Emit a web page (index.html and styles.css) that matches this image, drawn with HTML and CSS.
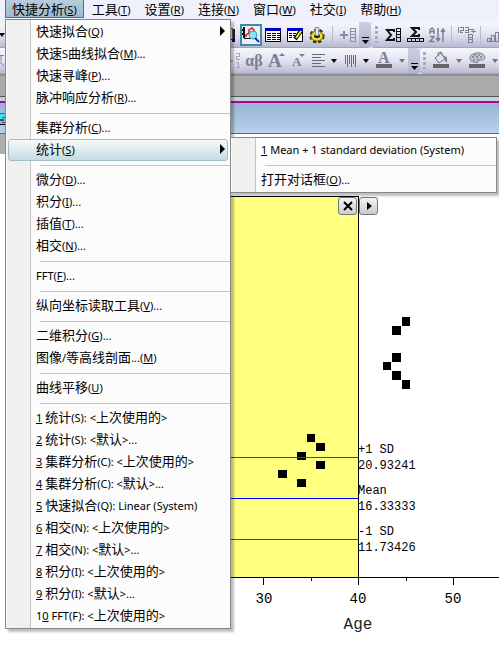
FILE: index.html
```html
<!DOCTYPE html>
<html lang="zh-CN">
<head>
<meta charset="utf-8">
<title>快捷分析</title>
<link rel="stylesheet" href="styles.css">
</head>
<body>
<nav class="menubar">
  <button class="top open">快捷分析<span class="k">(<u>S</u>)</span></button>
  <button class="top">工具<span class="k">(<u>T</u>)</span></button>
  <button class="top">设置<span class="k">(<u>R</u>)</span></button>
  <button class="top">连接<span class="k">(<u>N</u>)</span></button>
  <button class="top">窗口<span class="k">(<u>W</u>)</span></button>
  <button class="top">社交<span class="k">(<u>I</u>)</span></button>
  <button class="top">帮助<span class="k">(<u>H</u>)</span></button>
</nav>

<div class="toolrow">
  <div class="toolbar">
    <button class="arrow edge" aria-label="更多"><svg width="6" height="4"><path d="M0 0h6L3 4z"/></svg></button>
    <span class="covered-one"></span>
    <button class="tool" aria-label="列"><svg width="16" height="18"><path fill="#ffee20" stroke="#555" d="M3.500 2.500h8v11h-8z"/><path stroke="#222" stroke-width="2" d="M13 3v12"/><path fill="#0000a0" d="M8 13h6v3h-3v-2H8z"/></svg></button>
    <button class="tool active" aria-label="缩放"><svg width="18" height="18" fill="none"><path stroke="#111" stroke-width="2" d="M2 1v11M0 4h2M0 8h2"/><path stroke="#111" d="M2 12.500h7"/><path stroke="#e01010" stroke-width="1.500" d="M4 11V9l3-2V4l3-2 2 2v2"/><circle cx="11" cy="9" r="4" fill="#7ee8f4" stroke="#4798b0"/><path stroke="#1828b0" stroke-width="2" d="M13 12l4 4"/></svg></button>
    <button class="tool" aria-label="工作表"><svg width="16" height="16" shape-rendering="crispEdges"><path fill="#fff" stroke="#000" d="M.5 1.500h15v13H.5z"/><path fill="#0000c8" d="M0 1h16v3H0z"/><path stroke="#000" stroke-dasharray="4 1" d="M2 6.500h13M2 8.500h13M2 10.500h13M2 12.500h13"/></svg></button>
    <button class="tool" aria-label="编辑"><svg width="16" height="16"><path fill="#fff" stroke="#000" d="M.5 1.500h15v13H.5z"/><path fill="#0000c8" d="M0 1h16v3H0z"/><path stroke="#000" stroke-dasharray="3 1" d="M2 6.500h8M2 8.500h6M2 10.500h4"/><path stroke="#000" stroke-width="4" d="M14 4l-6 8"/><path stroke="#ffe820" stroke-width="2" d="M14 4l-5 7"/></svg></button>
    <button class="tool" aria-label="设置"><svg width="18" height="16"><circle cx="9" cy="9" r="6" fill="#d8c018" stroke="#373000" stroke-width="3" stroke-dasharray="3 2"/><ellipse cx="9" cy="9" rx="6" ry="5" fill="#f0dc38" stroke="#807000"/><ellipse cx="9" cy="9" rx="3" ry="2" fill="#222"/><path fill="#eee" stroke="#888" d="M7.500.5h3v8h-3z"/></svg></button>
    <span class="sep"></span>
    <button class="tool" aria-label="添加列"><svg width="18" height="16" fill="none" stroke="#8b8fa3" shape-rendering="crispEdges"><path stroke-width="2" d="M1 8h8M5 4v8"/><path d="M11.500 1.500h5v13h-5zM11 4.500h6M11 7.500h6M11 10.500h6"/></svg></button>
    <button class="more" aria-label="工具栏选项"><svg width="7" height="7"><path d="M0 0h7v1H0zM0 3h7L3.500 7z"/></svg></button>
  </div>
  <div class="toolbar rest">
    <span class="grip"></span>
    <button class="tool" aria-label="列统计"><svg width="17" height="16" fill="none" stroke="#111"><path stroke-width="2" d="M9 5V3H2l4 5-4 5h7v-2"/><path shape-rendering="crispEdges" d="M11.500 1.500h4v13h-4zM11 4.500h5M11 7.500h5M11 10.500h5"/></svg></button>
    <button class="tool" aria-label="行统计"><svg width="17" height="16" fill="none" stroke="#111"><path stroke-width="2" d="M12 3V1H5l4 4-4 4h7V7"/><path shape-rendering="crispEdges" d="M.5 11.500h16v3H.5zM4.500 11v4M8.500 11v4M12.500 11v4"/></svg></button>
    <button class="tool" aria-label="排序"><svg width="17" height="16" fill="none" stroke="#7d8196" stroke-width="1.500"><path d="M1 7V3l2-2 2 2v4M1 4.500h4M1 9.500h4l-4 5h4.500M9 1v13M7 11l2 3 2-3M14 15V2M12 5l2-3 2 3"/></svg></button>
    <span class="sep"></span>
    <button class="tool" aria-label="设置列值"><svg width="19" height="18" fill="none" stroke="#7d8196" shape-rendering="crispEdges"><path d="M1.500 1v6M3 1.500h3v3H3.500V6.500H6M8 1.500h3v5H8M8 4.500h3M12 3.500h4.500v3M14 5.500h5"/><path d="M11.500 8.500h4v8h-4zM11 11.500h5M11 13.500h5"/></svg></button>
    <span class="sep"></span>
    <button class="tool" aria-label="柱状图"><svg width="16" height="16" fill="none" stroke="#7d8196" shape-rendering="crispEdges"><path d="M.5 14.500v-3h3v3zM4.500 14.500v-6h3v6zM8.500 14.500v-9h3v9zM12.500 14.500v-12h3v12z"/></svg></button>
  </div>
</div>

<div class="toolrow format">
  <div class="toolbar">
    <button class="arrow edge" aria-label="字体"><svg width="6" height="12" fill="none" stroke="#7d8196"><path d="M0 .5h5M0 6l5 5M2 1v5"/></svg></button>
    <span class="covered-two"></span>
    <button class="tool" aria-label="上下标"><svg width="14" height="17" fill="none" stroke="#a3a6b4" shape-rendering="crispEdges"><path stroke-width="2" d="M0 9h6"/><path d="M9 1.500h3.500v3h-3v3H13M9 10.500h2v5M9 15.500h4"/></svg></button>
    <button class="tool" aria-label="希腊字母"><span class="greek">αβ</span></button>
    <button class="tool wide" aria-label="增大字体"><svg width="17" height="17" class="dim"><text x="0" y="15" class="glyph">A</text><path d="M11 4l3-3 3 3z"/></svg></button>
    <button class="tool" aria-label="减小字体"><svg width="14" height="17" class="dim"><text x="1" y="14" class="glyph-small">A</text><path d="M8 2h6l-3 3z"/></svg></button>
    <button class="tool" aria-label="对齐"><svg width="13" height="14" shape-rendering="crispEdges" stroke="#666a7c"><path d="M0 .5h13M0 3.500h9M0 6.500h13M0 9.500h9M0 12.500h13"/></svg></button>
    <button class="arrow" aria-label="对齐选项"><svg width="6" height="4"><path d="M0 0h6L3 4z"/></svg></button>
    <button class="tool" aria-label="分布"><svg width="13" height="14" shape-rendering="crispEdges" stroke="#666a7c"><path d="M1.500 1v9M3.500 1v12M5.500 1v9M7.500 1v12M9.500 1v9M11.500 1v12"/></svg></button>
    <button class="arrow" aria-label="分布选项"><svg width="6" height="4"><path d="M0 0h6L3 4z"/></svg></button>
    <button class="tool wide" aria-label="字体颜色"><svg width="17" height="17" class="dim"><text x="2" y="11" class="glyph-bold">A</text><path fill="#666" d="M0 12h16v4H0z"/></svg></button>
    <button class="arrow gray" aria-label="颜色选项"><svg width="6" height="4"><path d="M0 0h6L3 4z"/></svg></button>
    <button class="more" aria-label="工具栏选项"><svg width="7" height="7"><path d="M0 0h7v1H0zM0 3h7L3.500 7z"/></svg></button>
  </div>
  <div class="toolbar rest">
    <span class="grip"></span>
    <button class="tool wide" aria-label="填充颜色"><svg width="17" height="17"><path fill="#dfe2ea" stroke="#6f7385" d="M2 6l6-5 4 6-6 4z"/><path fill="none" stroke="#6f7385" d="M5 4V1l3-1 2 4"/><path fill="#7d8196" d="M11 4l3 1v6l-2-2z"/><path fill="#666" d="M0 12h16v4H0z"/></svg></button>
    <button class="arrow gray" aria-label="填充选项"><svg width="6" height="4"><path d="M0 0h6L3 4z"/></svg></button>
    <button class="tool wide" aria-label="调色板"><svg width="17" height="17"><path fill="#c3c6d0" stroke="#7d8196" d="M2 9Q-1 4 4 2q6-3 10 0 4 4 0 6h-4l-2 3z"/><path fill="none" stroke="#8a8ea0" stroke-width="2" stroke-dasharray="2 2" d="M3 5h11M5 3h7M4 8h6"/><path fill="#666" d="M0 12h16v4H0z"/></svg></button>
    <button class="arrow gray" aria-label="调色板选项"><svg width="6" height="4"><path d="M0 0h6L3 4z"/></svg></button>
  </div>
</div>

<div class="workspace"></div>
<div class="titlebar">
  <svg width="5" height="12" shape-rendering="crispEdges"><path fill="#40e0e8" d="M0 0h5v12H0z"/><path fill="#d03030" d="M0 0h5v1H0zM2 4h3v1H2z"/><path fill="#803070" d="M0 6h4v2H0zM2 9h3v1H2z"/><path d="M0 11h5v1H0z"/></svg>
</div>

<main class="graph">
  <svg class="plot" shape-rendering="crispEdges">
    <path fill="#aeaeae" d="M0 0h5v20H0z"/>
    <path fill="#ffff80" d="M200 62h158v381H200z"/>
    <g id="points">
      <path d="M307 300h8v8h-8zM316 309h9v8h-9zM297 318h9v8h-9zM316 327h9v8h-9zM278 336h9v8h-9zM297 345h9v8h-9z"/>
      <path d="M402 183h8v9h-8zM392 192h9v9h-9zM392 219h9v9h-9zM383 228h8v8h-8zM392 237h9v9h-9zM402 246h8v9h-8z"/>
    </g>
    <path stroke="#f00" d="M200 323.500h158M200 405.500h158"/>
    <path stroke="#00f" d="M200 364.500h158"/>
    <path stroke="#000" fill="none" d="M200 62.500h158.500v381M200 443.500h299M263.500 443v8M358.500 443v8M453.500 443v8M311.500 443v4M406.500 443v4"/>
    <g class="note">
      <text x="358" y="319">+1 SD</text><text x="358" y="335">20.93241</text>
      <text x="358" y="360">Mean</text><text x="358" y="376">16.33333</text>
      <text x="358" y="401">-1 SD</text><text x="358" y="417">11.73426</text>
    </g>
    <g class="scale">
      <text x="264" y="469">30</text><text x="358" y="469">40</text><text x="453" y="469">50</text>
    </g>
    <text class="axis" x="358" y="495">Age</text>
  </svg>
  <div class="handles">
    <button aria-label="关闭"><svg width="10" height="10"><path stroke="#000" stroke-width="2" d="M1 1l8 8M9 1L1 9"/></svg></button>
    <button aria-label="展开"><svg width="10" height="10"><path d="M3 1v8l5-4z"/></svg></button>
  </div>
</main>

<ul class="menu">
  <li class="sub">快速拟合<span class="k">(<u>Q</u>)</span></li>
  <li>快速<span class="k">S</span>曲线拟合<span class="k">(<u>M</u>)...</span></li>
  <li>快速寻峰<span class="k">(<u>P</u>)...</span></li>
  <li>脉冲响应分析<span class="k">(<u>R</u>)...</span></li>
  <li class="rule"></li>
  <li>集群分析<span class="k">(<u>C</u>)...</span></li>
  <li class="sub hot">统计<span class="k">(<u>S</u>)</span>
    <ul class="menu flyout">
      <li><span class="k"><u>1</u> Mean + 1 standard deviation (System)</span></li>
      <li class="rule"></li>
      <li>打开对话框<span class="k">(<u>O</u>)...</span></li>
    </ul>
  </li>
  <li class="rule"></li>
  <li>微分<span class="k">(<u>D</u>)...</span></li>
  <li>积分<span class="k">(<u>I</u>)...</span></li>
  <li>插值<span class="k">(<u>T</u>)...</span></li>
  <li>相交<span class="k">(<u>N</u>)...</span></li>
  <li class="rule"></li>
  <li><span class="k">FFT(<u>F</u>)...</span></li>
  <li class="rule"></li>
  <li>纵向坐标读取工具<span class="k">(<u>V</u>)...</span></li>
  <li class="rule"></li>
  <li>二维积分<span class="k">(<u>G</u>)...</span></li>
  <li>图像<span class="k">/</span>等高线剖面<span class="k">...(<u>M</u>)</span></li>
  <li class="rule"></li>
  <li>曲线平移<span class="k">(<u>U</u>)</span></li>
  <li class="rule"></li>
  <li><span class="k"><u>1</u> </span>统计<span class="k">(S): &lt;</span>上次使用的<span class="k">&gt;</span></li>
  <li><span class="k"><u>2</u> </span>统计<span class="k">(S): &lt;</span>默认<span class="k">&gt;...</span></li>
  <li><span class="k"><u>3</u> </span>集群分析<span class="k">(C): &lt;</span>上次使用的<span class="k">&gt;</span></li>
  <li><span class="k"><u>4</u> </span>集群分析<span class="k">(C): &lt;</span>默认<span class="k">&gt;...</span></li>
  <li><span class="k"><u>5</u> </span>快速拟合<span class="k">(Q): Linear (System)</span></li>
  <li><span class="k"><u>6</u> </span>相交<span class="k">(N): &lt;</span>上次使用的<span class="k">&gt;</span></li>
  <li><span class="k"><u>7</u> </span>相交<span class="k">(N): &lt;</span>默认<span class="k">&gt;...</span></li>
  <li><span class="k"><u>8</u> </span>积分<span class="k">(I): &lt;</span>上次使用的<span class="k">&gt;</span></li>
  <li><span class="k"><u>9</u> </span>积分<span class="k">(I): &lt;</span>默认<span class="k">&gt;...</span></li>
  <li><span class="k">1<u>0</u> FFT(F): &lt;</span>上次使用的<span class="k">&gt;</span></li>
</ul>
</body>
</html>
```
FILE: styles.css
```css
* { box-sizing: border-box; }
body {
  margin: 0;
  min-height: 100vh;
  display: flex;
  flex-direction: column;
  background: #fff;
  color: #000;
  font: 13px/20px "Noto Sans CJK SC", sans-serif;
  overflow: hidden;
}
button {
  margin: 0;
  padding: 0;
  border: 0;
  background: none;
  color: inherit;
  font: inherit;
}
svg { display: block; flex: none; overflow: visible; }
.k { font: 11px/18px "Noto Sans", sans-serif; white-space: pre; }

.menubar {
  display: flex;
  height: 22px;
  padding-left: 5px;
  background: #eef1fc;
}
.top {
  flex: none;
  height: 18px;
  padding: 0 7px;
  line-height: 18px;
  white-space: nowrap;
}
.top.open {
  margin-right: 1px;
  border: 1px solid #2e7f96;
  border-top: 0;
  padding: 0 6px;
  background: linear-gradient(#b8cddb, #9db9cc);
}

.toolrow { display: flex; height: 26px; background: #dcdef0; }
.toolbar {
  display: flex;
  flex: none;
  align-items: center;
  background: linear-gradient(#f6f7fd, #e2e3f0 50%, #b9bad2);
  border-bottom: 1px solid #a3a4bd;
  border-radius: 0 4px 4px 0;
  overflow: hidden;
}
.toolbar.rest { flex: 1 1 0; min-width: 0; border-radius: 4px 0 0 4px; }
.tool {
  display: flex;
  flex: none;
  align-items: center;
  justify-content: center;
  width: 22px;
  height: 22px;
}
.format .tool { width: 20px; }
.format .tool.wide { width: 24px; }
.tool.active { border: 2px solid #3f8ba3; background: #e9f1f8; }
.arrow { display: flex; flex: none; justify-content: center; width: 12px; }
.arrow.edge { width: 5px; justify-content: flex-end; }
.arrow.gray { fill: #777; }
.covered-one { flex: none; width: 213px; }
.covered-two { flex: none; width: 219px; }
.sep { flex: none; width: 1px; height: 18px; margin: 0 4px; background: #b9bac8; }
.rest .sep { margin: 0 3px; }
.more {
  display: flex;
  flex: none;
  align-self: stretch;
  align-items: flex-end;
  justify-content: center;
  width: 12px;
  padding-bottom: 3px;
  background: linear-gradient(#cdcee2, #b3b4ce);
}
.grip {
  flex: none;
  width: 3px;
  height: 17px;
  margin: 0 4px;
  background: repeating-linear-gradient(#a9aabc 0 3px, transparent 3px 5px);
}
.format .grip { margin: 0 3px; }
.dim { fill: #7b7f92; }
.greek { font: bold 16px/20px "Liberation Serif", serif; color: #7b7f92; }
.glyph { font: bold 19px "Liberation Serif", serif; }
.glyph-small { font: bold 13px "Liberation Serif", serif; }
.glyph-bold { font: bold 16px "Liberation Serif", serif; }

.workspace {
  height: 23px;
  border-top: 2px solid #8e8e92;
  border-bottom: 1px solid #555;
  background: #aaa;
}
.titlebar {
  height: 37px;
  padding-top: 12px;
  border-top: 4px solid #bfd3e2;
  border-bottom: 1px solid #666;
  background: linear-gradient(#b4008c 0 2px, #96b3d4 2px, #b9d1ea);
}

.graph { position: relative; flex: 1; display: flex; }
.plot { width: 100%; height: 521px; }
.note { font: 12px "Liberation Mono", monospace; }
.scale { font: 14px "Liberation Mono", monospace; text-anchor: middle; }
.axis { font: 16px "Liberation Mono", monospace; text-anchor: middle; fill: #222; }
.handles { position: absolute; left: 338px; top: 63px; display: flex; gap: 2px; }
.handles button {
  display: flex;
  align-items: center;
  justify-content: center;
  width: 19px;
  height: 18px;
  border: 1px solid #777;
  border-radius: 3px;
  background: linear-gradient(#f4f4f4, #ccc);
}

.menu {
  position: absolute;
  left: 5px;
  top: 19px;
  width: 226px;
  margin: 0;
  padding: 1px 0;
  list-style: none;
  border: 1px solid #868686;
  background: linear-gradient(90deg, #fcfcfc 1px, #f0f0f0 1px 24px, #c5c5c5 24px 25px, #fcfcfc 25px);
  box-shadow: 3px 3px 2px rgba(0, 0, 0, .25);
}
.menu li { height: 22px; padding-left: 30px; white-space: nowrap; }
.menu .rule {
  height: 1px;
  margin: 4px 0 3px 34px;
  padding: 0;
  background: #c5c5c5;
}
.sub { position: relative; }
.sub::after {
  content: "";
  position: absolute;
  right: 5px;
  top: 5px;
  border: 5px solid transparent;
  border-left-color: #000;
  border-right: 0;
}
.hot::before {
  content: "";
  position: absolute;
  inset: 0 2px 0 2px;
  z-index: -1;
  border: 1px solid #a5bcc6;
  border-radius: 3px;
  background: linear-gradient(#f6fafb, #c6dce3);
}
.hot { z-index: 1; }
.menu.flyout {
  left: calc(100% + 1px);
  top: -2px;
  width: 266px;
  border-left: 0;
}
```
